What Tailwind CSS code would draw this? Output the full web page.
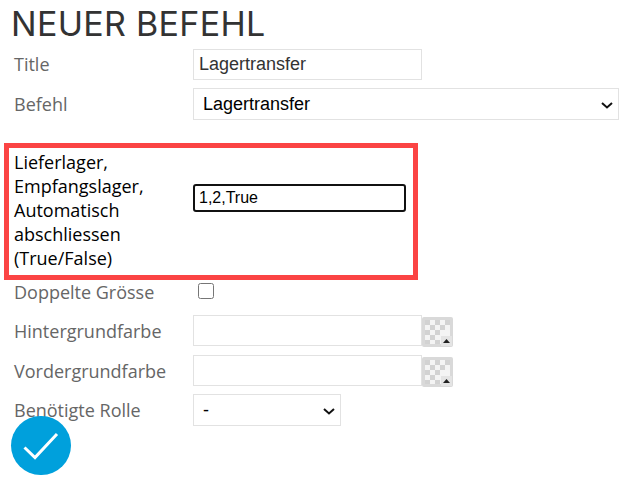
<!DOCTYPE html>
<html lang="de">
<head>
    <meta charset="UTF-8">
    <title>Neuer Befehl</title>
    <script src="https://cdn.jsdelivr.net/npm/@tailwindcss/browser@4"></script>
</head>
<body class="bg-white font-['Open_Sans',sans-serif] text-[18px] text-[#666]">
    <div class="relative h-[479px] w-[633px] overflow-hidden">
        <h1 class="h-[49px] pl-[11px] pt-[4px] font-['Inter',sans-serif] text-[34px] leading-[40px] font-normal tracking-[0.3px] text-[#333]">NEUER BEFEHL</h1>
        <form>
            <div class="flex h-[31px] items-center pl-[14px]">
                <label class="w-[179px]">Title</label>
                <input type="text" value="Lagertransfer" class="h-[31px] w-[229px] border border-[#e2e2e2] px-[5px] font-['Liberation_Sans',sans-serif] text-[18px] text-[#333]">
            </div>
            <div class="mt-[8px] flex h-[32px] items-center pl-[14px]">
                <label class="w-[179px]">Befehl</label>
                <div class="relative">
                    <select class="h-[32px] w-[426px] appearance-none border border-[#e2e2e2] bg-white pl-[9px] font-['Liberation_Sans',sans-serif] text-[18px] text-black">
                        <option>Lagertransfer</option>
                    </select>
                    <svg class="absolute top-[14px] right-[6px]" width="12" height="7" viewBox="0 0 12 7" fill="none" stroke="#111" stroke-width="2">
                        <path d="M1 1L6 5.500L11 1"/>
                    </svg>
                </div>
            </div>
            <div class="mt-[23px] ml-[4px] flex h-[137px] w-[414px] items-start border-[5px] border-[#fb4444] pl-[5px] text-black">
                <label class="w-[179px] pt-[2px] leading-[24px]">Lieferlager, Empfangslager, Automatisch abschliessen (True/False)</label>
                <input type="text" value="1,2,True" class="mt-[36px] h-[28px] w-[213px] rounded-[3px] border-2 border-[#111] px-[4px] font-['Liberation_Sans',sans-serif] text-[16px] text-black">
            </div>
            <div class="mt-[1px] flex h-[24px] items-center pl-[14px]">
                <label class="mb-[2px] w-[184px]">Doppelte Grösse</label>
                <input type="checkbox" class="mb-[5px] h-[16px] w-[16px] appearance-auto">
            </div>
            <div class="mt-[10px] flex h-[32px] items-start pl-[14px]">
                <label class="w-[179px] leading-[32px]">Hintergrundfarbe</label>
                <input type="text" class="h-[31px] w-[229px] border border-[#e2e2e2]">
                <div class="mt-[2px] h-[30px] w-[31px]">
                    <svg width="31" height="30" viewBox="0 0 31 30">
                        <rect width="31" height="30" rx="2" fill="#d9d9d9"/>
                        <rect x="3" y="3" width="25" height="24" fill="#f4f4f4"/>
                        <path d="M3 3h5v5H3zM13 3h5v5h-5zM23 3h5v5h-5zM8 8h5v5H8zM18 8h5v5h-5zM3 13h5v5H3zM13 13h5v5h-5zM8 18h5v5H8zM3 23h5v4H3zM13 23h5v4h-5z" fill="#d2d2d2"/>
                        <rect x="19" y="19" width="11" height="10" fill="#e4e4e4"/>
                        <path d="M21 26l3.500-4 3.500 4z" fill="#222"/>
                    </svg>
                </div>
            </div>
            <div class="mt-[8px] flex h-[32px] items-start pl-[14px]">
                <label class="w-[179px] leading-[32px]">Vordergrundfarbe</label>
                <input type="text" class="h-[31px] w-[229px] border border-[#e2e2e2]">
                <div class="mt-[2px] h-[30px] w-[31px]">
                    <svg width="31" height="30" viewBox="0 0 31 30">
                        <rect width="31" height="30" rx="2" fill="#d9d9d9"/>
                        <rect x="3" y="3" width="25" height="24" fill="#f4f4f4"/>
                        <path d="M3 3h5v5H3zM13 3h5v5h-5zM23 3h5v5h-5zM8 8h5v5H8zM18 8h5v5h-5zM3 13h5v5H3zM13 13h5v5h-5zM8 18h5v5H8zM3 23h5v4H3zM13 23h5v4h-5z" fill="#d2d2d2"/>
                        <rect x="19" y="19" width="11" height="10" fill="#e4e4e4"/>
                        <path d="M21 26l3.500-4 3.500 4z" fill="#222"/>
                    </svg>
                </div>
            </div>
            <div class="mt-[7px] flex h-[32px] items-center pl-[14px]">
                <label class="w-[179px]">Benötigte Rolle</label>
                <div class="relative">
                    <select class="h-[32px] w-[148px] appearance-none border border-[#e2e2e2] bg-white pl-[9px] font-['Liberation_Sans',sans-serif] text-[18px] text-black">
                        <option>-</option>
                    </select>
                    <svg class="absolute top-[14px] right-[6px]" width="12" height="7" viewBox="0 0 12 7" fill="none" stroke="#111" stroke-width="2">
                        <path d="M1 1L6 5.500L11 1"/>
                    </svg>
                </div>
            </div>
            <button type="button" class="absolute top-[416px] left-[11px] flex h-[59px] w-[60px] items-center justify-center rounded-full bg-[#00a0dc]">
                <svg width="36" height="28" viewBox="0 0 36 28" fill="none" stroke="#fff" stroke-width="3">
                    <path d="M1.500 15.500L12 25.500L34 2"/>
                </svg>
            </button>
        </form>
    </div>
</body>
</html>
